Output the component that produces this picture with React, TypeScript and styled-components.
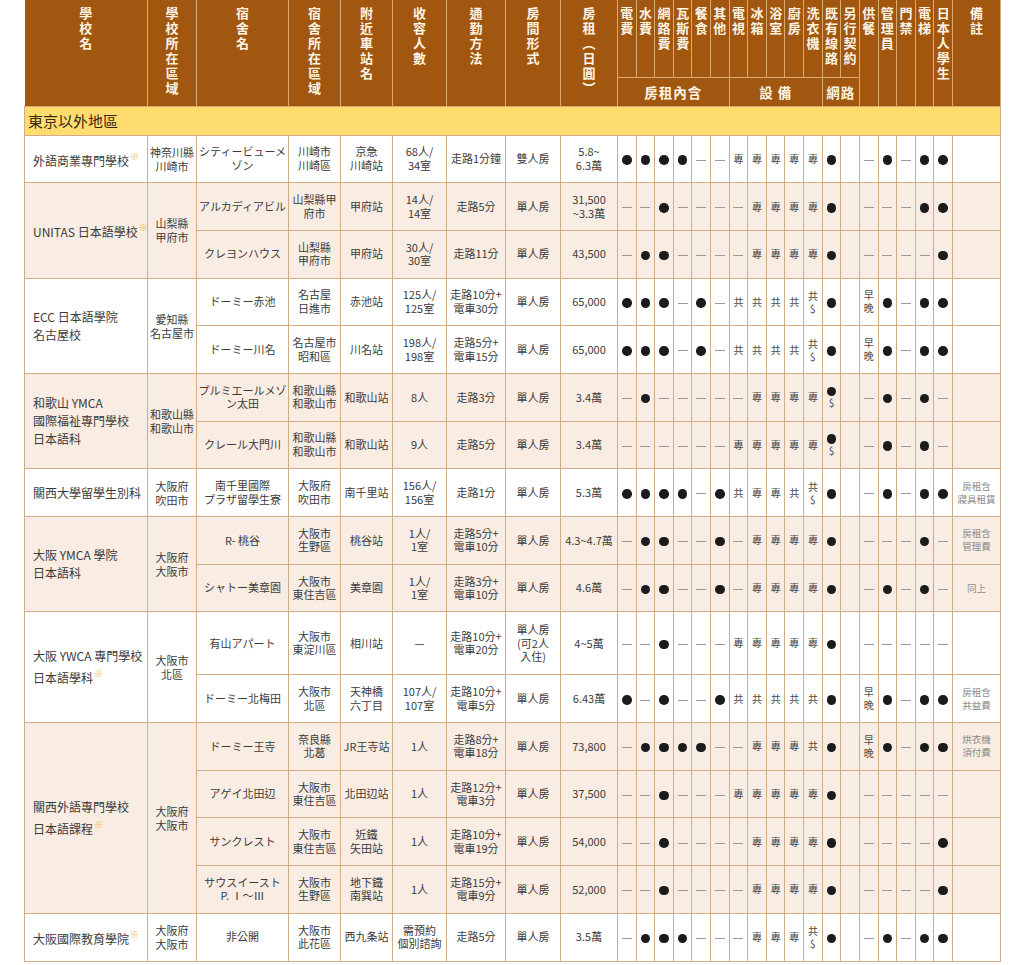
import React from 'react';
import styled, { createGlobalStyle } from 'styled-components';

const GlobalStyle = createGlobalStyle`
  html, body { margin: 0; padding: 0; background: #ffffff; }
  body { font-family: "Noto Sans CJK TC", "Noto Sans CJK JP", sans-serif; }
`;

const LINE = '#cfad86';
const HEAD_LINE = '#d9ab73';
const PINK = '#f9ece3';

const Page = styled.div`
  width: 1024px;
  padding-left: 24px;
  box-sizing: border-box;
`;

const Table = styled.table`
  width: 976px;
  table-layout: fixed;
  border-collapse: collapse;
  font-family: "Noto Sans CJK TC", "Noto Sans CJK JP", sans-serif;
  color: #3a3a3a;
`;

const Col = styled.col<{ $w: number }>`
  width: ${p => p.$w}px;
`;

const HeadRow = styled.tr<{ $h: number }>`
  height: ${p => p.$h}px;
`;

const HeadCell = styled.th<{ $first?: boolean }>`
  background: #a1570f;
  color: #fff4e3;
  border: 1px solid ${HEAD_LINE};
  border-top: none;
  ${p => (p.$first ? 'border-left: none;' : '')}
  padding: 7px 0 0;
  vertical-align: top;
  text-align: center;
  font-weight: 700;
  font-size: 13px;
  line-height: 1;
`;

const GroupCell = styled.th`
  background: #a1570f;
  color: #fff4e3;
  border: 1px solid ${HEAD_LINE};
  padding: 0;
  vertical-align: middle;
  text-align: center;
  font-weight: 700;
  font-size: 13.5px;
  letter-spacing: 1px;
`;

const VText = styled.span`
  display: inline-block;
  writing-mode: vertical-rl;
  letter-spacing: 2px;
  line-height: 1;
`;

const AreaRow = styled.tr`
  height: 29px;
`;

const AreaCell = styled.td`
  background: #fedc6e;
  border: 1px solid ${LINE};
  border-top: none;
  padding: 0 0 0 3px;
  font-size: 15px;
  color: #3a2815;
  text-align: left;
  vertical-align: middle;
`;

const BodyRow = styled.tr<{ $tall?: boolean }>`
  height: ${p => (p.$tall ? 63 : 47.7)}px;
`;

const Cell = styled.td<{ $bg: string }>`
  background: ${p => p.$bg};
  border: 1px solid ${LINE};
  padding: 0 1px;
  text-align: center;
  vertical-align: middle;
  font-size: 11px;
  line-height: 13.5px;
  color: #3b3b3b;
  overflow: hidden;
  white-space: nowrap;
`;

const SchoolCell = styled(Cell)`
  text-align: left;
  padding: 0 0 0 8px;
  font-size: 12px;
  line-height: 18px;
  overflow: visible;
`;

const LocCell = styled(Cell)`
  font-size: 11px;
  line-height: 14px;
`;

const MarkCell = styled(Cell)`
  padding: 0;
  font-size: 10px;
  line-height: 12px;
  color: #4a4a4a;
`;

const NoteCell = styled(Cell)`
  font-size: 9.5px;
  line-height: 13px;
  color: #8a8a8a;
`;

const Star = styled.span`
  color: #f1b23a;
  font-size: 9px;
  vertical-align: 6px;
  margin-left: 1px;
`;

const Dot = styled.span`
  display: inline-block;
  width: 9.5px;
  height: 9.5px;
  border-radius: 50%;
  background: #1b1b1b;
  vertical-align: middle;
`;

const Dash = styled.span`
  display: inline-block;
  width: 10px;
  height: 1px;
  background: #999999;
  vertical-align: middle;
`;

const Stack = styled.span`
  display: inline-flex;
  flex-direction: column;
  align-items: center;
  gap: 1px;
  line-height: 12px;
`;

const Dollar = styled.span`
  font-size: 10px;
  line-height: 11px;
  color: #4a4a4a;
`;

type Dorm = {
  name: string[];
  area: string[];
  station: string[];
  cap: string[];
  commute: string[];
  room: string[];
  rent: string[];
  marks: string;
  note?: string[];
  tall?: boolean;
};

type School = {
  name: string[];
  star?: boolean;
  loc: string[];
  dorms: Dorm[];
};

const schools: School[] = [
  {
    name: ['外語商業專門學校'],
    star: true,
    loc: ['神奈川縣', '川崎市'],
    dorms: [
      {
        name: ['シティービューメ', 'ゾン'],
        area: ['川崎市', '川崎區'],
        station: ['京急', '川崎站'],
        cap: ['68人/', '34室'],
        commute: ['走路1分鐘'],
        room: ['雙人房'],
        rent: ['5.8~', '6.3萬'],
        marks: 'o o o o - - 專 專 專 專 專 o _ - o - o o',
      },
    ],
  },
  {
    name: ['UNITAS 日本語學校'],
    star: true,
    loc: ['山梨縣', '甲府市'],
    dorms: [
      {
        name: ['アルカディアビル'],
        area: ['山梨縣甲', '府市'],
        station: ['甲府站'],
        cap: ['14人/', '14室'],
        commute: ['走路5分'],
        room: ['單人房'],
        rent: ['31,500', '~3.3萬'],
        marks: '- - o - - - - 專 專 專 專 o _ - - - o o',
      },
      {
        name: ['クレヨンハウス'],
        area: ['山梨縣', '甲府市'],
        station: ['甲府站'],
        cap: ['30人/', '30室'],
        commute: ['走路11分'],
        room: ['單人房'],
        rent: ['43,500'],
        marks: '- o o - - - - 專 專 專 專 o _ - - - - o',
      },
    ],
  },
  {
    name: ['ECC 日本語學院', '名古屋校'],
    loc: ['愛知縣', '名古屋市'],
    dorms: [
      {
        name: ['ドーミー赤池'],
        area: ['名古屋', '日進市'],
        station: ['赤池站'],
        cap: ['125人/', '125室'],
        commute: ['走路10分+', '電車30分'],
        room: ['單人房'],
        rent: ['65,000'],
        marks: 'o o o - o - 共 共 共 共 共$ o _ 早晚 o - o o',
      },
      {
        name: ['ドーミー川名'],
        area: ['名古屋市', '昭和區'],
        station: ['川名站'],
        cap: ['198人/', '198室'],
        commute: ['走路5分+', '電車15分'],
        room: ['單人房'],
        rent: ['65,000'],
        marks: 'o o o - o - 共 共 共 共 共$ o _ 早晚 o - o o',
      },
    ],
  },
  {
    name: ['和歌山 YMCA', '國際福祉專門學校', '日本語科'],
    loc: ['和歌山縣', '和歌山市'],
    dorms: [
      {
        name: ['プルミエールメゾ', 'ン太田'],
        area: ['和歌山縣', '和歌山市'],
        station: ['和歌山站'],
        cap: ['8人'],
        commute: ['走路3分'],
        room: ['單人房'],
        rent: ['3.4萬'],
        marks: '- o - - - - - 專 專 專 專 o$ _ - o - o -',
      },
      {
        name: ['クレール大門川'],
        area: ['和歌山縣', '和歌山市'],
        station: ['和歌山站'],
        cap: ['9人'],
        commute: ['走路5分'],
        room: ['單人房'],
        rent: ['3.4萬'],
        marks: '- - - - - - 專 專 專 專 專 o$ _ - o - o -',
      },
    ],
  },
  {
    name: ['關西大學留學生別科'],
    loc: ['大阪府', '吹田市'],
    dorms: [
      {
        name: ['南千里國際', 'プラザ留學生寮'],
        area: ['大阪府', '吹田市'],
        station: ['南千里站'],
        cap: ['156人/', '156室'],
        commute: ['走路1分'],
        room: ['單人房'],
        rent: ['5.3萬'],
        marks: 'o o o o - o 共 專 專 共 共$ o _ - o - o o',
        note: ['房租含', '寢具租賃'],
      },
    ],
  },
  {
    name: ['大阪 YMCA 學院', '日本語科'],
    loc: ['大阪府', '大阪市'],
    dorms: [
      {
        name: ['R- 桃谷'],
        area: ['大阪市', '生野區'],
        station: ['桃谷站'],
        cap: ['1人/', '1室'],
        commute: ['走路5分+', '電車10分'],
        room: ['單人房'],
        rent: ['4.3~4.7萬'],
        marks: '- o o - - o - 專 專 專 專 o _ - - - o -',
        note: ['房租含', '管理費'],
      },
      {
        name: ['シャトー美章園'],
        area: ['大阪市', '東住吉區'],
        station: ['美章園'],
        cap: ['1人/', '1室'],
        commute: ['走路3分+', '電車10分'],
        room: ['單人房'],
        rent: ['4.6萬'],
        marks: '- o o - - o - 專 專 專 專 o _ - o - o -',
        note: ['同上'],
      },
    ],
  },
  {
    name: ['大阪 YWCA 專門學校', '日本語學科'],
    star: true,
    loc: ['大阪市', '北區'],
    dorms: [
      {
        name: ['有山アパート'],
        area: ['大阪市', '東淀川區'],
        station: ['相川站'],
        cap: ['—'],
        commute: ['走路10分+', '電車20分'],
        room: ['單人房', '(可2人', '入住)'],
        rent: ['4~5萬'],
        marks: '- - o - - - 專 專 專 專 專 o _ - - - - -',
        tall: true,
      },
      {
        name: ['ドーミー北梅田'],
        area: ['大阪市', '北區'],
        station: ['天神橋', '六丁目'],
        cap: ['107人/', '107室'],
        commute: ['走路10分+', '電車5分'],
        room: ['單人房'],
        rent: ['6.43萬'],
        marks: 'o - o - - o 共 共 共 共 共 o _ 早晚 o - o o',
        note: ['房租含', '共益費'],
      },
    ],
  },
  {
    name: ['關西外語專門學校', '日本語課程'],
    star: true,
    loc: ['大阪府', '大阪市'],
    dorms: [
      {
        name: ['ドーミー王寺'],
        area: ['奈良縣', '北葛'],
        station: ['JR王寺站'],
        cap: ['1人'],
        commute: ['走路8分+', '電車18分'],
        room: ['單人房'],
        rent: ['73,800'],
        marks: '- o o o o - - 專 專 專 共 o _ 早晚 o - o o',
        note: ['烘衣機', '須付費'],
      },
      {
        name: ['アゲイ北田辺'],
        area: ['大阪市', '東住吉區'],
        station: ['北田辺站'],
        cap: ['1人'],
        commute: ['走路12分+', '電車3分'],
        room: ['單人房'],
        rent: ['37,500'],
        marks: '- - o - - - 專 專 專 專 專 o _ - - - - -',
      },
      {
        name: ['サンクレスト'],
        area: ['大阪市', '東住吉區'],
        station: ['近鐵', '矢田站'],
        cap: ['1人'],
        commute: ['走路10分+', '電車19分'],
        room: ['單人房'],
        rent: ['54,000'],
        marks: '- - o - - - - 專 專 專 專 o _ - - - - o',
      },
      {
        name: ['サウスイースト', 'P. Ⅰ～Ⅲ'],
        area: ['大阪市', '生野區'],
        station: ['地下鐵', '南巽站'],
        cap: ['1人'],
        commute: ['走路15分+', '電車9分'],
        room: ['單人房'],
        rent: ['52,000'],
        marks: '- - o - - - - 專 專 專 專 o _ - - - - o',
      },
    ],
  },
  {
    name: ['大阪國際教育學院'],
    star: true,
    loc: ['大阪府', '大阪市'],
    dorms: [
      {
        name: ['非公開'],
        area: ['大阪市', '此花區'],
        station: ['西九条站'],
        cap: ['需預約', '個別諮詢'],
        commute: ['走路5分'],
        room: ['單人房'],
        rent: ['3.5萬'],
        marks: '- o o o - - - 專 專 專 共$ o _ - o - o o',
      },
    ],
  },
];

const bigHeads = ['學校名', '學校所在區域', '宿舍名', '宿舍所在區域', '附近車站名', '收容人數', '通勤方法', '房間形式', '房租（日圓）'];
const groupedHeads = ['電費', '水費', '網路費', '瓦斯費', '餐食', '其他', '電視', '冰箱', '浴室', '廚房', '洗衣機', '既有線路', '另行契約'];
const tallHeads = ['供餐', '管理員', '門禁', '電梯', '日本人學生', '備註'];
const widths = [123, 49, 92, 52, 52, 54, 59, 55, 57, ...Array(18).fill(335 / 18), 48];

const Lines: React.FC<{ lines: string[]; star?: boolean }> = ({ lines, star }) => (
  <>
    {lines.map((l, i) => (
      <React.Fragment key={i}>
        {i > 0 && <br />}
        {l}
        {star && i === lines.length - 1 && <Star>※</Star>}
      </React.Fragment>
    ))}
  </>
);

const Mark: React.FC<{ code: string }> = ({ code }) => {
  switch (code) {
    case 'o':
      return <Dot />;
    case '-':
      return <Dash />;
    case '_':
      return null;
    case 'o$':
      return (
        <Stack>
          <Dot />
          <Dollar>$</Dollar>
        </Stack>
      );
    case '共$':
      return (
        <Stack>
          <span>共</span>
          <Dollar>$</Dollar>
        </Stack>
      );
    case '早晚':
      return (
        <Stack>
          <span>早</span>
          <span>晚</span>
        </Stack>
      );
    default:
      return <span>{code}</span>;
  }
};

export default function App() {
  return (
    <Page>
      <GlobalStyle />
      <Table>
        <colgroup>
          {widths.map((w, i) => (
            <Col key={i} $w={w} />
          ))}
        </colgroup>
        <thead>
          <HeadRow $h={77}>
            {bigHeads.map((h, i) => (
              <HeadCell key={h} rowSpan={2} $first={i === 0}>
                <VText>{h}</VText>
              </HeadCell>
            ))}
            {groupedHeads.map(h => (
              <HeadCell key={h}>
                <VText>{h}</VText>
              </HeadCell>
            ))}
            {tallHeads.map(h => (
              <HeadCell key={h} rowSpan={2}>
                <VText>{h}</VText>
              </HeadCell>
            ))}
          </HeadRow>
          <HeadRow $h={29}>
            <GroupCell colSpan={6}>房租內含</GroupCell>
            <GroupCell colSpan={5}>設 備</GroupCell>
            <GroupCell colSpan={2}>網路</GroupCell>
          </HeadRow>
        </thead>
        <tbody>
          <AreaRow>
            <AreaCell colSpan={28}>東京以外地區</AreaCell>
          </AreaRow>
          {schools.map((s, si) => {
            const bg = si % 2 === 0 ? '#ffffff' : PINK;
            return s.dorms.map((d, di) => (
              <BodyRow key={`${si}-${di}`} $tall={d.tall}>
                {di === 0 && (
                  <>
                    <SchoolCell $bg={bg} rowSpan={s.dorms.length}>
                      <Lines lines={s.name} star={s.star} />
                    </SchoolCell>
                    <LocCell $bg={bg} rowSpan={s.dorms.length}>
                      <Lines lines={s.loc} />
                    </LocCell>
                  </>
                )}
                <Cell $bg={bg}>
                  <Lines lines={d.name} />
                </Cell>
                <Cell $bg={bg}>
                  <Lines lines={d.area} />
                </Cell>
                <Cell $bg={bg}>
                  <Lines lines={d.station} />
                </Cell>
                <Cell $bg={bg}>
                  <Lines lines={d.cap} />
                </Cell>
                <Cell $bg={bg}>
                  <Lines lines={d.commute} />
                </Cell>
                <Cell $bg={bg}>
                  <Lines lines={d.room} />
                </Cell>
                <Cell $bg={bg}>
                  <Lines lines={d.rent} />
                </Cell>
                {d.marks.split(' ').map((m, mi) => (
                  <MarkCell key={mi} $bg={bg}>
                    <Mark code={m} />
                  </MarkCell>
                ))}
                <NoteCell $bg={bg}>{d.note && <Lines lines={d.note} />}</NoteCell>
              </BodyRow>
            ));
          })}
        </tbody>
      </Table>
    </Page>
  );
}
